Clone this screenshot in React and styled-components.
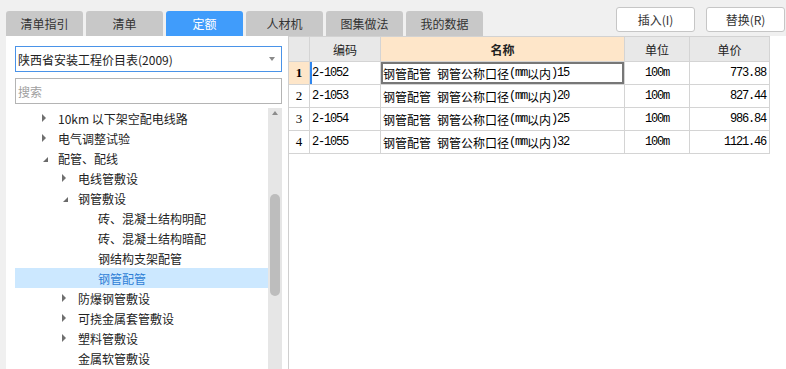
import React from "react";
import styled, { createGlobalStyle, css } from "styled-components";

const Global = createGlobalStyle`
  html, body { margin: 0; padding: 0; background: #f0f0f0; }
  body { font-family: "Noto Sans CJK SC", "Liberation Sans", sans-serif; }
  * { box-sizing: border-box; }
`;

const Page = styled.div`
  width: 786px;
  height: 369px;
  display: flex;
  flex-direction: column;
  background: #f0f0f0;
  overflow: hidden;
`;

const TopBar = styled.div`
  height: 36px;
  display: flex;
  align-items: flex-end;
  justify-content: space-between;
  padding-left: 6px;
  padding-right: 1px;
`;

const Tabs = styled.div`
  display: flex;
  gap: 3px;
`;

const Tab = styled.div`
  width: 77px;
  height: 25px;
  border-radius: 3px 3px 0 0;
  display: flex;
  align-items: center;
  justify-content: center;
  font-size: 12px;
  color: ${(p) => (p.$active ? "#ffffff" : "#333333")};
  background: ${(p) => (p.$active ? "#409cfb" : "#c8c8c8")};
`;

const Buttons = styled.div`
  align-self: flex-start;
  margin-top: 7px;
  display: flex;
  gap: 11px;
`;

const Button = styled.div`
  width: 79px;
  height: 25px;
  border: 1px solid #c6c6c6;
  border-radius: 3px;
  background: #ffffff;
  display: flex;
  align-items: center;
  justify-content: center;
  font-size: 12px;
  color: #333;
`;

const Main = styled.div`
  flex: 1;
  display: flex;
  min-height: 0;
`;

const LeftPanel = styled.div`
  margin-left: 6px;
  width: 282px;
  background: #ffffff;
  padding: 10px 6px 0 9px;
  display: flex;
  flex-direction: column;
`;

const Select = styled.div`
  height: 26px;
  border: 1px solid #4a93e8;
  display: flex;
  align-items: center;
  justify-content: space-between;
  padding: 0 6px 0 2px;
  font-size: 12px;
  color: #222;
`;

const Caret = styled.span`
  width: 0;
  height: 0;
  border-left: 3.5px solid transparent;
  border-right: 3.5px solid transparent;
  border-top: 4px solid #8a8a8a;
`;

const Search = styled.div`
  margin-top: 6px;
  height: 26px;
  border: 1px solid #b4b4b4;
  display: flex;
  align-items: center;
  padding-left: 2px;
  font-size: 12px;
  color: #a0a0a0;
`;

const TreeWrap = styled.div`
  margin-top: 4px;
  flex: 1;
  display: flex;
  min-height: 0;
`;

const TreeList = styled.div`
  flex: 1;
  overflow: hidden;
`;

const TreeRow = styled.div`
  height: 20px;
  display: flex;
  align-items: center;
  padding-left: ${(p) => p.$level * 20 + 5}px;
  font-size: 12px;
  color: ${(p) => (p.$selected ? "#2f7fd6" : "#222")};
  background: ${(p) => (p.$selected ? "#cce8ff" : "transparent")};
  white-space: nowrap;
`;

const ArrowSlot = styled.span`
  width: 18px;
  height: 20px;
  display: flex;
  align-items: center;
  flex-shrink: 0;
`;

const Arrow = styled.span`
  width: 0;
  height: 0;
  ${(p) =>
    p.$open
      ? css`
          margin-left: 3px;
          margin-top: 2px;
          border-left: 5px solid transparent;
          border-bottom: 5px solid #6a6a6a;
        `
      : css`
          margin-left: 2px;
          border-top: 4px solid transparent;
          border-bottom: 4px solid transparent;
          border-left: 4px solid #707070;
        `}
`;

const ScrollTrack = styled.div`
  width: 14px;
  background: #e6e6e6;
  position: relative;
`;

const ScrollUp = styled.span`
  position: absolute;
  left: 3.5px;
  top: 3px;
  width: 0;
  height: 0;
  border-left: 3.5px solid transparent;
  border-right: 3.5px solid transparent;
  border-bottom: 4px solid #8c8c8c;
`;

const ScrollThumb = styled.div`
  position: absolute;
  left: 2px;
  top: 86px;
  width: 10px;
  height: 102px;
  border-radius: 5px;
  background: #bdbdbd;
`;

const RightPanel = styled.div`
  flex: 1;
  background: #ffffff;
  border-left: 1px solid #cfcfcf;
`;

const Grid = styled.div`
  display: grid;
  grid-template-columns: 21px 71px 244px 65px 80px;
  grid-auto-rows: 23px;
  grid-template-rows: 25px;
  width: 481px;
  border-top: 1px solid #d2d2d2;
`;

const Cell = styled.div`
  border-right: 1px solid #d4d4d4;
  border-bottom: 1px solid #d4d4d4;
  display: flex;
  align-items: center;
  font-size: 12px;
  color: #000;
  white-space: nowrap;
  overflow: hidden;
  justify-content: ${(p) =>
    p.$align === "right" ? "flex-end" : p.$align === "center" ? "center" : "flex-start"};
  padding: ${(p) => (p.$align === "right" ? "0 3px 0 0" : p.$align === "center" ? "0" : "0 0 0 2px")};
`;

const HeadCell = styled(Cell)`
  justify-content: center;
  padding: 0;
  background: ${(p) => (p.$hl ? "#fee6c9" : "#e8e8e8")};
  font-weight: ${(p) => (p.$hl ? 700 : 400)};
  color: #222;
`;

const NumCell = styled(Cell)`
  justify-content: center;
  padding: 0;
  font-family: "Liberation Serif", serif;
  font-size: 13px;
  background: ${(p) => (p.$current ? "#fee6c9" : "#ffffff")};
  font-weight: ${(p) => (p.$current ? 700 : 400)};
`;

const CodeCell = styled(Cell)`
  ${(p) =>
    p.$current &&
    css`
      box-shadow: inset 2px 0 0 #2f86ee;
    `}
`;

const NameCell = styled(Cell)`
  ${(p) =>
    p.$current &&
    css`
      box-shadow: inset 0 0 0 2px #777777;
    `}
`;

const Half = styled.span`
  font-family: "Liberation Mono", monospace;
  letter-spacing: -1.2px;
  white-space: pre;
`;

const Mixed = ({ text }) =>
  text.split(/([\x00-\x7f]+)/).filter(Boolean).map((part, i) =>
    /^[\x00-\x7f]+$/.test(part) ? <Half key={i}>{part}</Half> : <span key={i}>{part}</span>
  );

const tabs = ["清单指引", "清单", "定额", "人材机", "图集做法", "我的数据"];

const tree = [
  { level: 1, arrow: "right", text: "10km 以下架空配电线路" },
  { level: 1, arrow: "right", text: "电气调整试验" },
  { level: 1, arrow: "open", text: "配管、配线" },
  { level: 2, arrow: "right", text: "电线管敷设" },
  { level: 2, arrow: "open", text: "钢管敷设" },
  { level: 3, text: "砖、混凝土结构明配" },
  { level: 3, text: "砖、混凝土结构暗配" },
  { level: 3, text: "钢结构支架配管" },
  { level: 3, text: "钢管配管", selected: true },
  { level: 2, arrow: "right", text: "防爆钢管敷设" },
  { level: 2, arrow: "right", text: "可挠金属套管敷设" },
  { level: 2, arrow: "right", text: "塑料管敷设" },
  { level: 2, text: "金属软管敷设" },
];

const rows = [
  { code: "2-1052", name: "钢管配管 钢管公称口径(mm以内)15", unit: "100m", price: "773.88" },
  { code: "2-1053", name: "钢管配管 钢管公称口径(mm以内)20", unit: "100m", price: "827.44" },
  { code: "2-1054", name: "钢管配管 钢管公称口径(mm以内)25", unit: "100m", price: "986.84" },
  { code: "2-1055", name: "钢管配管 钢管公称口径(mm以内)32", unit: "100m", price: "1121.46" },
];

export default function App() {
  return (
    <Page>
      <Global />
      <TopBar>
        <Tabs>
          {tabs.map((t) => (
            <Tab key={t} $active={t === "定额"}>{t}</Tab>
          ))}
        </Tabs>
        <Buttons>
          <Button>插入(I)</Button>
          <Button>替换(R)</Button>
        </Buttons>
      </TopBar>
      <Main>
        <LeftPanel>
          <Select>
            <span>陕西省安装工程价目表(2009)</span>
            <Caret />
          </Select>
          <Search>搜索</Search>
          <TreeWrap>
            <TreeList>
              {tree.map((n, i) => (
                <TreeRow key={i} $level={n.level} $selected={n.selected}>
                  <ArrowSlot>{n.arrow && <Arrow $open={n.arrow === "open"} />}</ArrowSlot>
                  {n.text}
                </TreeRow>
              ))}
            </TreeList>
            <ScrollTrack>
              <ScrollUp />
              <ScrollThumb />
            </ScrollTrack>
          </TreeWrap>
        </LeftPanel>
        <RightPanel>
          <Grid>
            <HeadCell />
            <HeadCell>编码</HeadCell>
            <HeadCell $hl>名称</HeadCell>
            <HeadCell>单位</HeadCell>
            <HeadCell>单价</HeadCell>
            {rows.map((r, i) => (
              <React.Fragment key={r.code}>
                <NumCell $current={i === 0}>{i + 1}</NumCell>
                <CodeCell $current={i === 0}><Half>{r.code}</Half></CodeCell>
                <NameCell $current={i === 0}><Mixed text={r.name} /></NameCell>
                <Cell $align="center"><Half>{r.unit}</Half></Cell>
                <Cell $align="right"><Half>{r.price}</Half></Cell>
              </React.Fragment>
            ))}
          </Grid>
        </RightPanel>
      </Main>
    </Page>
  );
}
